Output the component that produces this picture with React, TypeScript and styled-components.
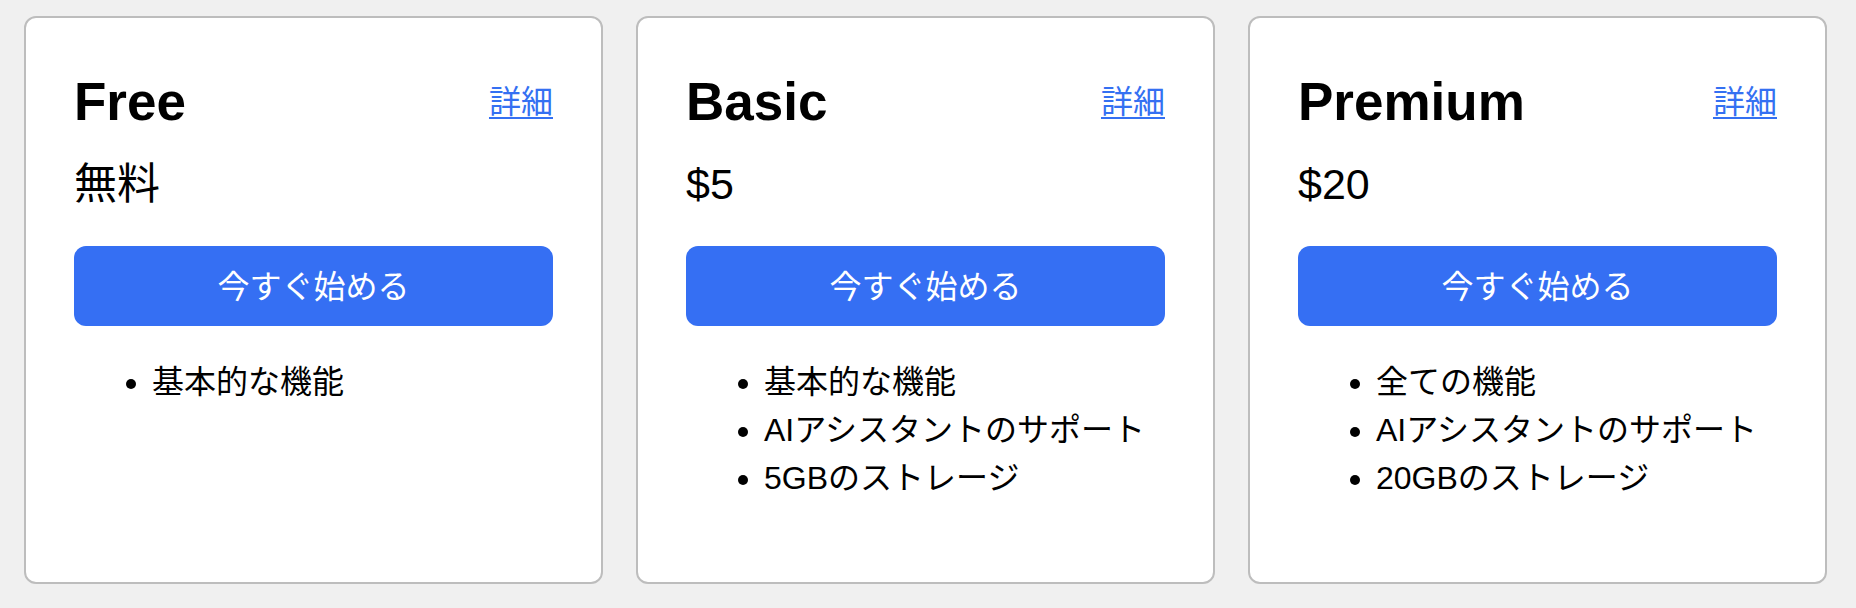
import styled, { createGlobalStyle } from "styled-components";

interface Plan {
  name: string;
  price: string;
  features: string[];
}

const plans: Plan[] = [
  { name: "Free", price: "無料", features: ["基本的な機能"] },
  {
    name: "Basic",
    price: "$5",
    features: ["基本的な機能", "AIアシスタントのサポート", "5GBのストレージ"],
  },
  {
    name: "Premium",
    price: "$20",
    features: ["全ての機能", "AIアシスタントのサポート", "20GBのストレージ"],
  },
];

const PlanCard = ({ name, price, features }: Plan) => {
  return (
    <CardBase>
      <CardHeader>
        <PlanName>{name}</PlanName>
        <DetailLink href="#">詳細</DetailLink>
      </CardHeader>
      <PlanPrice>{price}</PlanPrice>
      <StartButton type="button">今すぐ始める</StartButton>
      <FeatureList>
        {features.map((feature) => (
          <FeatureItem key={feature}>{feature}</FeatureItem>
        ))}
      </FeatureList>
    </CardBase>
  );
};

const App = () => {
  return (
    <>
      <GlobalStyle />
      <PlanGrid>
        {plans.map((plan) => (
          <PlanCard key={plan.name} {...plan} />
        ))}
      </PlanGrid>
    </>
  );
};

export default App;

const GlobalStyle = createGlobalStyle`
  html, body {
    margin: 0;
    background: #f0f0f0;
  }
  body {
    font-family: "Liberation Sans", "Noto Sans CJK JP", sans-serif;
    color: #000;
  }
`;

const PlanGrid = styled.div`
  display: flex;
  align-items: stretch;
  gap: 33px;
  padding: 16px 29px 24px 24px;
`;

const CardBase = styled.div`
  flex: 1;
  min-width: 0;
  background: #fff;
  border: 2px solid #bdbdbd;
  border-radius: 12px;
  padding: 48px;
`;

const CardHeader = styled.div`
  display: flex;
  align-items: center;
  justify-content: space-between;
  margin-top: 4px;
`;

const PlanName = styled.h2`
  margin: 0;
  font-size: 53px;
  line-height: 64px;
  font-weight: 700;
`;

const DetailLink = styled.a`
  font-size: 32px;
  line-height: 46px;
  color: #3470f2;
  text-decoration: underline;
  text-decoration-thickness: 2px;
  text-underline-offset: 4px;
`;

const PlanPrice = styled.div`
  margin-top: 26px;
  font-size: 43px;
  line-height: 48px;
`;

const StartButton = styled.button`
  display: block;
  width: 100%;
  height: 80px;
  margin-top: 38px;
  padding: 0 0 4px;
  border: none;
  border-radius: 12px;
  background: #356ff3;
  color: #fff;
  font-family: "Liberation Sans", "Noto Sans CJK JP", sans-serif;
  font-size: 32px;
  cursor: pointer;
`;

const FeatureList = styled.ul`
  margin: 32px 0;
  padding-left: 78px;
  font-size: 32px;
  line-height: 48px;
`;

const FeatureItem = styled.li`
  list-style: disc;
`;
